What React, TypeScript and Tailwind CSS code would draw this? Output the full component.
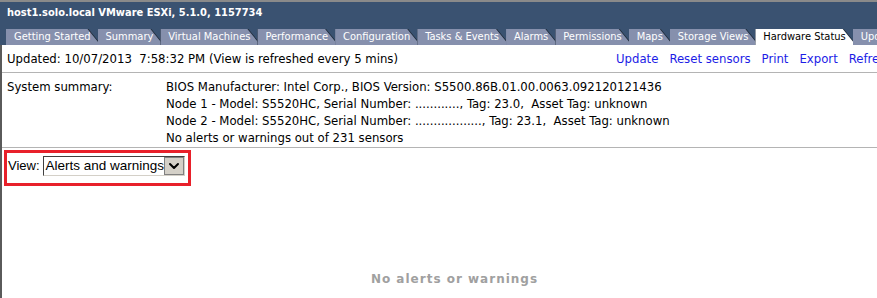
import { ChevronDown } from 'lucide-react';

const tabs = [
    'Getting Started',
    'Summary',
    'Virtual Machines',
    'Performance',
    'Configuration',
    'Tasks & Events',
    'Alarms',
    'Permissions',
    'Maps',
    'Storage Views',
    'Hardware Status',
    'Update Manager',
];

const summary = [
    'BIOS Manufacturer: Intel Corp., BIOS Version: S5500.86B.01.00.0063.092120121436',
    'Node 1 - Model: S5520HC, Serial Number: ............, Tag: 23.0,  Asset Tag: unknown',
    'Node 2 - Model: S5520HC, Serial Number: .................., Tag: 23.1,  Asset Tag: unknown',
    'No alerts or warnings out of 231 sensors',
];

function Tab({ label, active }: { label: string; active: boolean }) {
    return (
        <div className="relative -mr-[4px] shrink-0 bg-[#1f2a38] pr-[1px] [clip-path:polygon(0_0,calc(100%-13px)_0,100%_100%,0_100%)]">
            <div
                className={`h-[16px] pl-[8px] pr-[10px] leading-[16px] text-[11px] whitespace-nowrap [clip-path:polygon(0_0,calc(100%-13px)_0,100%_100%,0_100%)] ${active ? 'bg-white text-black' : 'bg-[#8690ad] text-white'}`}
            >
                {label}
            </div>
        </div>
    );
}

export default function App() {
    return (
        <div className="w-[877px] h-[298px] overflow-hidden bg-white flex flex-col font-['DejaVu_Sans_Condensed','DejaVu_Sans',sans-serif] text-[13px] text-black">
            {/* Title bar and tabs */}
            <div className="border-t-2 border-[#8a8a8a] bg-[#3a5271] pt-[4px]">
                <div className="pl-[7px] h-[23px] leading-[14px] text-[11px] font-bold text-white whitespace-nowrap">
                    host1.solo.local VMware ESXi, 5.1.0, 1157734
                </div>
                <div className="flex items-end pl-[6px] overflow-hidden">
                    {tabs.map((t) => (
                        <Tab key={t} label={t} active={t === 'Hardware Status'} />
                    ))}
                </div>
            </div>

            {/* Content */}
            <div className="flex-1 flex flex-col border-l-2 border-[#5a5a5a]">
                <div className="flex items-center h-[28px] pl-[5px] border-b border-[#b4b4b4] whitespace-nowrap">
                    <span className="w-[609px] shrink-0 whitespace-pre">Updated: 10/07/2013  7:58:32 PM (View is refreshed every 5 mins)</span>
                    <div className="flex gap-[11px] text-[#1c1ce6]">
                        <span>Update</span>
                        <span>Reset sensors</span>
                        <span>Print</span>
                        <span>Export</span>
                        <span>Refresh</span>
                    </div>
                </div>

                <div className="flex pl-[5px] pt-[5px] pb-[1px] border-b border-[#b4b4b4]">
                    <div className="w-[159px] leading-[17px]">System summary:</div>
                    <div className="flex flex-col leading-[17px]">
                        {summary.map((s) => (
                            <div key={s} className="whitespace-pre">{s}</div>
                        ))}
                    </div>
                </div>

                <div className="pl-[2px] pt-[2px]">
                    <div className="w-[187px] h-[36px] border-[3px] border-[#e8202a] flex items-center gap-[3px] pl-[1px] pb-[4px]">
                        <span className="font-['Liberation_Sans',sans-serif] text-[13px]">View:</span>
                        <div className="flex h-[20px] items-stretch border border-[#404040] border-r-[#d4d0c8] border-b-[#d4d0c8]">
                            <div className="w-[120px] pl-[2px] leading-[18px] font-['Liberation_Sans',sans-serif] text-[13.5px] bg-white whitespace-nowrap overflow-hidden">
                                Alerts and warnings
                            </div>
                            <div className="w-[20px] flex items-center justify-center bg-[#d4d0c8] border border-[#808080]">
                                <ChevronDown size={16} strokeWidth={3} className="text-black" />
                            </div>
                        </div>
                    </div>
                </div>

                <div className="flex-1 flex items-end justify-center pb-[10px] pl-[30px]">
                    <span className="text-[#a0a0a0] font-bold text-[12px] tracking-[1px] font-['DejaVu_Sans',sans-serif]">No alerts or warnings</span>
                </div>
            </div>
        </div>
    );
}
